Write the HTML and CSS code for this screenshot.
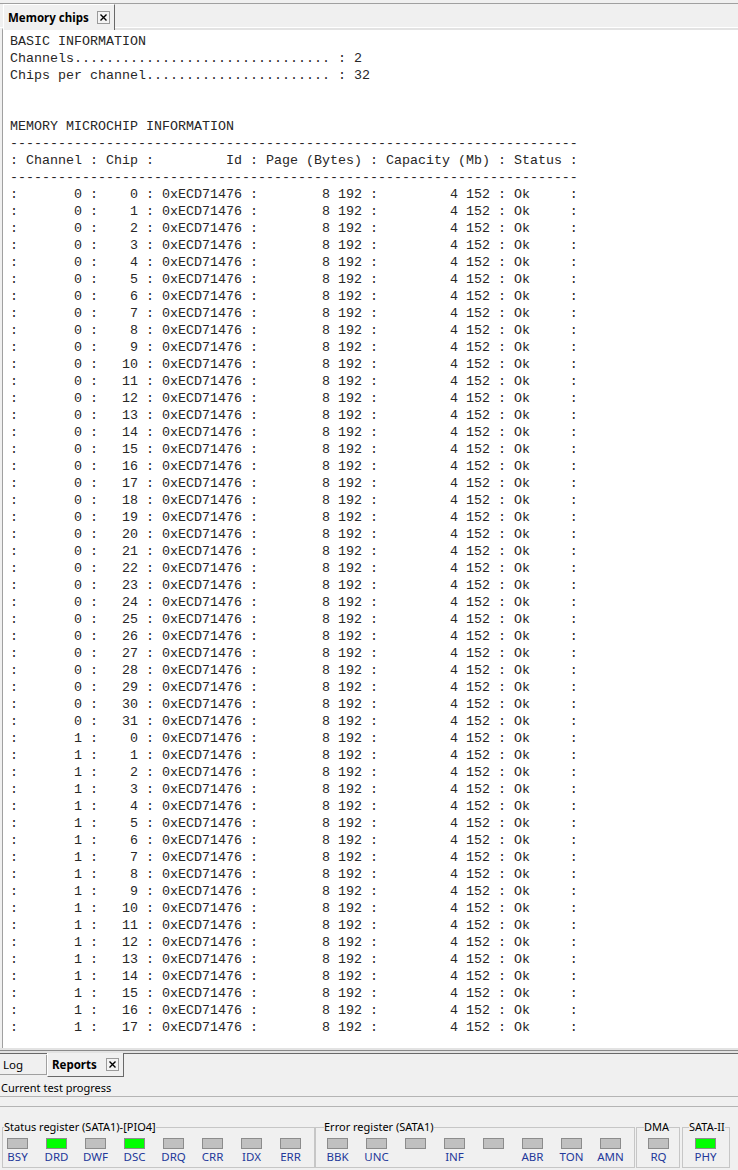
FILE: index.html
```html
<!DOCTYPE html>
<html lang="en">
<head>
    <meta charset="UTF-8">
    <title>Memory chips</title>
    <link rel="stylesheet" href="styles.css">
</head>
<body>
    <div class="top-edge"></div>

    <div class="doc-tabs">
        <div class="tab active">
            <span>Memory chips</span>
            <svg class="close" width="13" height="13" viewBox="0 0 13 13"><rect x="0.5" y="0.5" width="12" height="12" fill="#f4f4f4" stroke="#9a9a9a"/><path d="M3.5 3.5 L9.5 9.5 M9.5 3.5 L3.5 9.5" stroke="#000" stroke-width="1.4"/></svg>
        </div>
    </div>

    <div class="report">
<pre class="report-text">BASIC INFORMATION
Channels................................ : 2
Chips per channel....................... : 32


MEMORY MICROCHIP INFORMATION
-----------------------------------------------------------------------
: Channel : Chip :         Id : Page (Bytes) : Capacity (Mb) : Status :
-----------------------------------------------------------------------
:       0 :    0 : 0xECD71476 :        8 192 :         4 152 : Ok     :
:       0 :    1 : 0xECD71476 :        8 192 :         4 152 : Ok     :
:       0 :    2 : 0xECD71476 :        8 192 :         4 152 : Ok     :
:       0 :    3 : 0xECD71476 :        8 192 :         4 152 : Ok     :
:       0 :    4 : 0xECD71476 :        8 192 :         4 152 : Ok     :
:       0 :    5 : 0xECD71476 :        8 192 :         4 152 : Ok     :
:       0 :    6 : 0xECD71476 :        8 192 :         4 152 : Ok     :
:       0 :    7 : 0xECD71476 :        8 192 :         4 152 : Ok     :
:       0 :    8 : 0xECD71476 :        8 192 :         4 152 : Ok     :
:       0 :    9 : 0xECD71476 :        8 192 :         4 152 : Ok     :
:       0 :   10 : 0xECD71476 :        8 192 :         4 152 : Ok     :
:       0 :   11 : 0xECD71476 :        8 192 :         4 152 : Ok     :
:       0 :   12 : 0xECD71476 :        8 192 :         4 152 : Ok     :
:       0 :   13 : 0xECD71476 :        8 192 :         4 152 : Ok     :
:       0 :   14 : 0xECD71476 :        8 192 :         4 152 : Ok     :
:       0 :   15 : 0xECD71476 :        8 192 :         4 152 : Ok     :
:       0 :   16 : 0xECD71476 :        8 192 :         4 152 : Ok     :
:       0 :   17 : 0xECD71476 :        8 192 :         4 152 : Ok     :
:       0 :   18 : 0xECD71476 :        8 192 :         4 152 : Ok     :
:       0 :   19 : 0xECD71476 :        8 192 :         4 152 : Ok     :
:       0 :   20 : 0xECD71476 :        8 192 :         4 152 : Ok     :
:       0 :   21 : 0xECD71476 :        8 192 :         4 152 : Ok     :
:       0 :   22 : 0xECD71476 :        8 192 :         4 152 : Ok     :
:       0 :   23 : 0xECD71476 :        8 192 :         4 152 : Ok     :
:       0 :   24 : 0xECD71476 :        8 192 :         4 152 : Ok     :
:       0 :   25 : 0xECD71476 :        8 192 :         4 152 : Ok     :
:       0 :   26 : 0xECD71476 :        8 192 :         4 152 : Ok     :
:       0 :   27 : 0xECD71476 :        8 192 :         4 152 : Ok     :
:       0 :   28 : 0xECD71476 :        8 192 :         4 152 : Ok     :
:       0 :   29 : 0xECD71476 :        8 192 :         4 152 : Ok     :
:       0 :   30 : 0xECD71476 :        8 192 :         4 152 : Ok     :
:       0 :   31 : 0xECD71476 :        8 192 :         4 152 : Ok     :
:       1 :    0 : 0xECD71476 :        8 192 :         4 152 : Ok     :
:       1 :    1 : 0xECD71476 :        8 192 :         4 152 : Ok     :
:       1 :    2 : 0xECD71476 :        8 192 :         4 152 : Ok     :
:       1 :    3 : 0xECD71476 :        8 192 :         4 152 : Ok     :
:       1 :    4 : 0xECD71476 :        8 192 :         4 152 : Ok     :
:       1 :    5 : 0xECD71476 :        8 192 :         4 152 : Ok     :
:       1 :    6 : 0xECD71476 :        8 192 :         4 152 : Ok     :
:       1 :    7 : 0xECD71476 :        8 192 :         4 152 : Ok     :
:       1 :    8 : 0xECD71476 :        8 192 :         4 152 : Ok     :
:       1 :    9 : 0xECD71476 :        8 192 :         4 152 : Ok     :
:       1 :   10 : 0xECD71476 :        8 192 :         4 152 : Ok     :
:       1 :   11 : 0xECD71476 :        8 192 :         4 152 : Ok     :
:       1 :   12 : 0xECD71476 :        8 192 :         4 152 : Ok     :
:       1 :   13 : 0xECD71476 :        8 192 :         4 152 : Ok     :
:       1 :   14 : 0xECD71476 :        8 192 :         4 152 : Ok     :
:       1 :   15 : 0xECD71476 :        8 192 :         4 152 : Ok     :
:       1 :   16 : 0xECD71476 :        8 192 :         4 152 : Ok     :
:       1 :   17 : 0xECD71476 :        8 192 :         4 152 : Ok     :</pre>
    </div>

    <div class="splitter"></div>

    <div class="bottom-tabs">
        <div class="btab log">Log</div>
        <div class="btab active">
            <span>Reports</span>
            <svg class="close" width="13" height="13" viewBox="0 0 13 13"><rect x="0.5" y="0.5" width="12" height="12" fill="#f4f4f4" stroke="#9a9a9a"/><path d="M3.5 3.5 L9.5 9.5 M9.5 3.5 L3.5 9.5" stroke="#000" stroke-width="1.4"/></svg>
        </div>
    </div>

    <div class="progress-label">Current test progress</div>
    <div class="progress"></div>

    <div class="registers">
        <fieldset class="group status">
            <legend>Status register (SATA1)-[PIO4]</legend>
            <div class="leds">
                <div class="led"><div class="lamp"></div><div class="name">BSY</div></div>
                <div class="led"><div class="lamp on"></div><div class="name">DRD</div></div>
                <div class="led"><div class="lamp"></div><div class="name">DWF</div></div>
                <div class="led"><div class="lamp on"></div><div class="name">DSC</div></div>
                <div class="led"><div class="lamp"></div><div class="name">DRQ</div></div>
                <div class="led"><div class="lamp"></div><div class="name">CRR</div></div>
                <div class="led"><div class="lamp"></div><div class="name">IDX</div></div>
                <div class="led"><div class="lamp"></div><div class="name">ERR</div></div>
            </div>
        </fieldset>

        <fieldset class="group error">
            <legend>Error register (SATA1)</legend>
            <div class="leds">
                <div class="led"><div class="lamp"></div><div class="name">BBK</div></div>
                <div class="led"><div class="lamp"></div><div class="name">UNC</div></div>
                <div class="led"><div class="lamp"></div><div class="name"></div></div>
                <div class="led"><div class="lamp"></div><div class="name">INF</div></div>
                <div class="led"><div class="lamp"></div><div class="name"></div></div>
                <div class="led"><div class="lamp"></div><div class="name">ABR</div></div>
                <div class="led"><div class="lamp"></div><div class="name">TON</div></div>
                <div class="led"><div class="lamp"></div><div class="name">AMN</div></div>
            </div>
        </fieldset>

        <fieldset class="group dma">
            <legend>DMA</legend>
            <div class="leds">
                <div class="led"><div class="lamp"></div><div class="name">RQ</div></div>
            </div>
        </fieldset>

        <fieldset class="group sata">
            <legend>SATA-II</legend>
            <div class="leds">
                <div class="led"><div class="lamp on"></div><div class="name">PHY</div></div>
            </div>
        </fieldset>
    </div>
</body>
</html>
```

FILE: styles.css
```css
body {
    margin: 0;
    width: 738px;
    height: 1170px;
    overflow: hidden;
    background: #f0f0f0;
    color: #000;
    font-family: "Noto Sans", sans-serif;
    font-size: 11px;
}

.top-edge {
    height: 3px;
    border-bottom: 1px solid #a0a0a0;
}

/* document tabs */
.doc-tabs {
    height: 23px;
    border-bottom: 1px solid #fff;
    display: flex;
    align-items: flex-end;
    padding-left: 3px;
}

.tab {
    position: relative;
    z-index: 1;
    height: 26px;
    margin-bottom: -3px;
    box-sizing: border-box;
    display: flex;
    align-items: center;
    gap: 8px;
    padding: 0 4px 0 4px;
    background: #f0f0f0;
    border-top: 1px solid #fff;
    border-left: 1px solid #fff;
    border-right: 1px solid #696969;
    font-size: 11.5px;
    font-weight: bold;
}

.close {
    display: block;
    flex: none;
}

/* report text */
.report {
    height: 1020px;
    box-sizing: border-box;
    margin-left: 2px;
    border-left: 1px solid #a0a0a0;
    border-top: 2px solid #e3e3e3;
    background: #fff;
    padding: 3px 0 0 7px;
    overflow: hidden;
}

.report-text {
    margin: 0;
    font-family: "Liberation Mono", "Courier New", monospace;
    font-size: 13.333px;
    line-height: 17px;
    color: #262626;
}

.splitter {
    height: 3px;
    background: #e3e3e3;
    box-shadow: inset 0 1px #8a8a8a;
    border-top: 2px solid #e3e3e3;
    border-bottom: 1px solid #696969;
}

/* bottom tabs */
.bottom-tabs {
    display: flex;
    height: 23px;
}

.btab {
    box-sizing: border-box;
    display: flex;
    align-items: center;
    font-size: 11.5px;
}

.btab.log {
    width: 47px;
    height: 20px;
    margin-top: 1px;
    padding-left: 3px;
    border-right: 1px solid #a0a0a0;
    border-bottom: 1px solid #a0a0a0;
}

.btab.active {
    position: relative;
    z-index: 1;
    height: 24px;
    margin-top: -1px;
    gap: 9px;
    padding: 0 4px;
    background: #f0f0f0;
    border-left: 1px solid #fff;
    border-right: 1px solid #696969;
    border-bottom: 1px solid #696969;
    font-weight: bold;
}

.progress-label {
    margin-top: 3px;
    line-height: 16px;
    padding-left: 1px;
}

.progress {
    height: 9px;
    border-top: 1px solid #b4b4b4;
    border-bottom: 1px solid #b4b4b4;
}

/* register group boxes */
.registers {
    display: flex;
    margin-top: 12px;
    padding-left: 2px;
}

.group {
    margin: 0;
    box-sizing: border-box;
    min-width: 0;
    padding: 3px 0 3px 11px;
    border: 1px solid #c6c6c6;
}

.group legend {
    padding: 0;
    margin-left: -3px;
    line-height: 16px;
}

.group.status { width: 313px; padding-left: 4px; }
.group.error { width: 320px; }
.group.dma { width: 44px; margin-left: 1px; }
.group.dma legend { margin-left: -4px; }
.group.sata { width: 48px; margin-left: 2px; padding-left: 12px; }
.group.sata legend { margin-left: -6px; }

.leds {
    display: flex;
    gap: 18px;
}

.led {
    width: 21px;
    display: flex;
    flex-direction: column;
    align-items: center;
}

.lamp {
    width: 21px;
    height: 11px;
    box-sizing: border-box;
    border: 1px solid #8c8c8c;
    background: #c0c0c0;
}

.lamp.on { background: #00ff00; }

.name {
    height: 14px;
    margin-top: 1px;
    line-height: 14px;
    font-size: 11.5px;
    color: #23389a;
    white-space: nowrap;
}
```
